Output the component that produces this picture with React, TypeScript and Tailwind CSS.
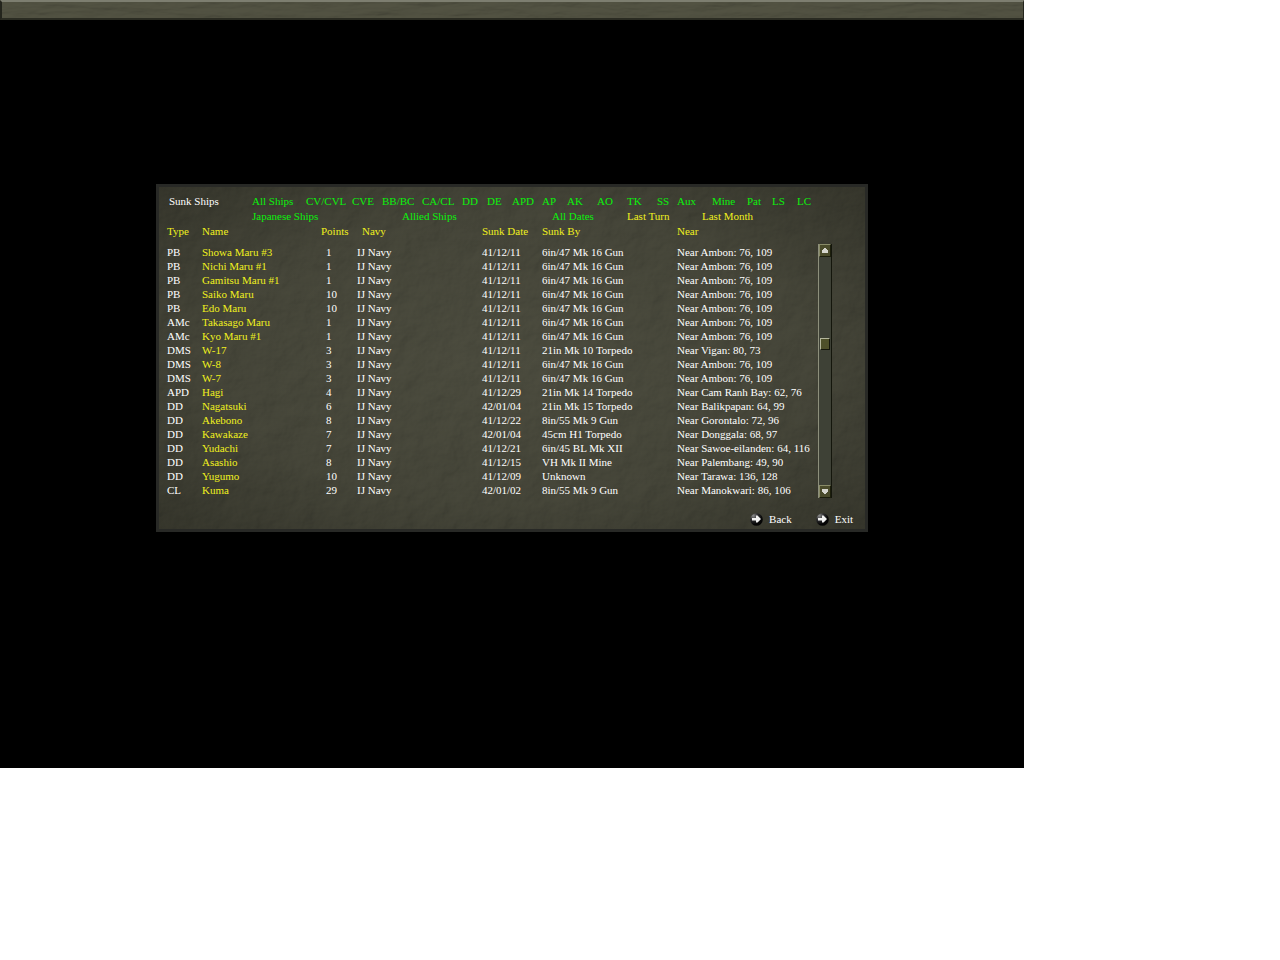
import { useState } from 'react';

type Ship = {
  type: string;
  name: string;
  points: number;
  date: string;
  by: string;
  near: string;
};

const ships: Ship[] = [
  { type: 'PB', name: 'Showa Maru #3', points: 1, date: '41/12/11', by: '6in/47 Mk 16 Gun', near: 'Ambon: 76, 109' },
  { type: 'PB', name: 'Nichi Maru #1', points: 1, date: '41/12/11', by: '6in/47 Mk 16 Gun', near: 'Ambon: 76, 109' },
  { type: 'PB', name: 'Gamitsu Maru #1', points: 1, date: '41/12/11', by: '6in/47 Mk 16 Gun', near: 'Ambon: 76, 109' },
  { type: 'PB', name: 'Saiko Maru', points: 10, date: '41/12/11', by: '6in/47 Mk 16 Gun', near: 'Ambon: 76, 109' },
  { type: 'PB', name: 'Edo Maru', points: 10, date: '41/12/11', by: '6in/47 Mk 16 Gun', near: 'Ambon: 76, 109' },
  { type: 'AMc', name: 'Takasago Maru', points: 1, date: '41/12/11', by: '6in/47 Mk 16 Gun', near: 'Ambon: 76, 109' },
  { type: 'AMc', name: 'Kyo Maru #1', points: 1, date: '41/12/11', by: '6in/47 Mk 16 Gun', near: 'Ambon: 76, 109' },
  { type: 'DMS', name: 'W-17', points: 3, date: '41/12/11', by: '21in Mk 10 Torpedo', near: 'Vigan: 80, 73' },
  { type: 'DMS', name: 'W-8', points: 3, date: '41/12/11', by: '6in/47 Mk 16 Gun', near: 'Ambon: 76, 109' },
  { type: 'DMS', name: 'W-7', points: 3, date: '41/12/11', by: '6in/47 Mk 16 Gun', near: 'Ambon: 76, 109' },
  { type: 'APD', name: 'Hagi', points: 4, date: '41/12/29', by: '21in Mk 14 Torpedo', near: 'Cam Ranh Bay: 62, 76' },
  { type: 'DD', name: 'Nagatsuki', points: 6, date: '42/01/04', by: '21in Mk 15 Torpedo', near: 'Balikpapan: 64, 99' },
  { type: 'DD', name: 'Akebono', points: 8, date: '41/12/22', by: '8in/55 Mk 9 Gun', near: 'Gorontalo: 72, 96' },
  { type: 'DD', name: 'Kawakaze', points: 7, date: '42/01/04', by: '45cm H1 Torpedo', near: 'Donggala: 68, 97' },
  { type: 'DD', name: 'Yudachi', points: 7, date: '41/12/21', by: '6in/45 BL Mk XII', near: 'Sawoe-eilanden: 64, 116' },
  { type: 'DD', name: 'Asashio', points: 8, date: '41/12/15', by: 'VH Mk II Mine', near: 'Palembang: 49, 90' },
  { type: 'DD', name: 'Yugumo', points: 10, date: '41/12/09', by: 'Unknown', near: 'Tarawa: 136, 128' },
  { type: 'CL', name: 'Kuma', points: 29, date: '42/01/02', by: '8in/55 Mk 9 Gun', near: 'Manokwari: 86, 106' },
];

const typeFilters = [
  'All Ships', 'CV/CVL', 'CVE', 'BB/BC', 'CA/CL', 'DD', 'DE', 'APD', 'AP',
  'AK', 'AO', 'TK', 'SS', 'Aux', 'Mine', 'Pat', 'LS', 'LC',
];

const scopeFilters = ['Japanese Ships', 'Allied Ships', 'All Dates', 'Last Turn', 'Last Month'];

function FilterButton({ label, on, onClick }: { label: string; on: boolean; onClick: () => void }) {
  return (
    <button
      type="button"
      aria-pressed={on}
      onClick={onClick}
      className={`text-left whitespace-nowrap ${on ? 'text-[#0cf00c]' : 'text-[#f0f01e]'}`}
    >
      {label}
    </button>
  );
}

// mottled stone surface behind the bar and the panel
function Stone({ id, frequency }: { id: string; frequency: string }) {
  return (
    <svg className="absolute inset-0 w-full h-full pointer-events-none" aria-hidden="true">
      <filter id={id} x="0" y="0" width="100%" height="100%">
        <feTurbulence type="fractalNoise" baseFrequency={frequency} numOctaves="5" seed="8" result="noise" />
        <feDiffuseLighting in="noise" surfaceScale="3" diffuseConstant="1" lightingColor="#78745c">
          <feDistantLight azimuth="225" elevation="45" />
        </feDiffuseLighting>
      </filter>
      <rect width="100%" height="100%" filter={`url(#${id})`} opacity="0.2" />
    </svg>
  );
}

function OrbIcon({ id }: { id: string }) {
  return (
    <svg width="13" height="13" viewBox="0 0 13 13" aria-hidden="true">
      <defs>
        <radialGradient id={id} cx="0.25" cy="0.2" r="0.7">
          <stop offset="0" stopColor="#8b8b8b" />
          <stop offset="0.5" stopColor="#2c2c2e" />
          <stop offset="1" stopColor="#050505" />
        </radialGradient>
      </defs>
      <circle cx="6.5" cy="6.5" r="6.3" fill={`url(#${id})`} />
      <path d="M2 5h4V2.5h1.5L11 6 7.5 9.5H6V7H2z" fill="#f0f0f0" />
      <path d="M2 7.5h4" stroke="#8a8a8a" />
    </svg>
  );
}

function NavButton({ label }: { label: string }) {
  return (
    <button type="button" className="flex items-center gap-1.5">
      <OrbIcon id={`orb-${label}`} />
      {label}
    </button>
  );
}

function ScrollBar() {
  const arrow =
    'flex items-center justify-center h-[13px] shrink-0 bg-[#4a4b2b] border border-t-[#898b68] border-l-[#898b68] border-b-[#1c1e0c] border-r-[#1c1e0c]';
  return (
    <div className="flex flex-col mt-5 w-3.5 h-[254px] bg-[#3e4136] border-l border-r border-l-[#8d8f7c] border-r-[#14160c]">
      <button type="button" aria-label="Scroll up" className={arrow}>
        <svg width="6" height="5" viewBox="0 0 6 5"><path d="M2 0h2v1h1v1h1v3H0V2h1V1h1z" fill="#d6d6ce" /></svg>
      </button>
      <div className="grow-3 basis-0" />
      <div className="h-3 mx-px shrink-0 bg-[#4e502a] border border-t-[#b4b69c] border-l-[#b4b69c] border-b-[#14160c] border-r-[#14160c]" />
      <div className="grow-5 basis-0" />
      <button type="button" aria-label="Scroll down" className={arrow}>
        <svg width="6" height="5" viewBox="0 0 6 5"><path d="M0 0h6v3H5v1H4v1H2V4H1V3H0z" fill="#d6d6ce" /></svg>
      </button>
    </div>
  );
}

export default function App() {
  const [active, setActive] = useState<string[]>([
    ...typeFilters,
    'Japanese Ships',
    'Allied Ships',
    'All Dates',
  ]);

  const toggle = (label: string) => {
    setActive(prev => (prev.includes(label) ? prev.filter(l => l !== label) : [...prev, label]));
  };

  return (
    <div className="min-h-screen bg-white">
      <main className="w-4/5 min-h-[80vh] bg-black text-white text-[11px] leading-[15px] font-['Liberation_Serif',serif]">
        <header className="relative h-5 bg-[#4b4c3e] border-t-2 border-t-[#7d7e70] border-b-2 border-b-[#2a2b22] border-l-2 border-l-[#24251d] border-r border-r-[#24251d]">
          <Stone id="stone-bar" frequency="0.02 0.12" />
        </header>

        <section className="relative w-[712px] mx-auto mt-41 border-3 border-[#282926] bg-[radial-gradient(ellipse_at_center,#44453a_0%,#3c3d33_60%,#282922_100%)]">
          <Stone id="stone-panel" frequency="0.04" />
          <div className="relative pt-[7px] pb-0.5 px-2">
            <div className="flex">
              <h1 className="w-[85px] pl-0.5">Sunk Ships</h1>
              <div>
                <div className="grid grid-cols-[54px_46px_30px_40px_40px_25px_25px_30px_25px_30px_30px_30px_20px_35px_35px_25px_25px_25px]">
                  {typeFilters.map(f => (
                    <FilterButton key={f} label={f} on={active.includes(f)} onClick={() => toggle(f)} />
                  ))}
                </div>
                <div className="grid grid-cols-[150px_150px_75px_75px_75px]">
                  {scopeFilters.map(f => (
                    <FilterButton key={f} label={f} on={active.includes(f)} onClick={() => toggle(f)} />
                  ))}
                </div>
              </div>
            </div>

            <div className="flex items-start">
              <table className="table-fixed w-[651px] text-left whitespace-nowrap">
                <colgroup>
                  <col className="w-[35px]" />
                  <col className="w-[119px]" />
                  <col className="w-[36px]" />
                  <col className="w-[125px]" />
                  <col className="w-[60px]" />
                  <col className="w-[135px]" />
                  <col />
                </colgroup>
                <thead className="text-[#f0f01e]">
                  <tr className="h-[21px] align-top">
                    <th className="font-normal">Type</th>
                    <th className="font-normal">Name</th>
                    <th className="font-normal">Points</th>
                    <th className="font-normal pl-[5px]">Navy</th>
                    <th className="font-normal">Sunk Date</th>
                    <th className="font-normal">Sunk By</th>
                    <th className="font-normal">Near</th>
                  </tr>
                </thead>
                <tbody className="leading-[14px]">
                  {ships.map(ship => (
                    <tr key={ship.name}>
                      <td>{ship.type}</td>
                      <td className="text-[#f0f01e]">{ship.name}</td>
                      <td className="pl-[5px]">{ship.points}</td>
                      <td>IJ Navy</td>
                      <td>{ship.date}</td>
                      <td>{ship.by}</td>
                      <td>Near {ship.near}</td>
                    </tr>
                  ))}
                </tbody>
              </table>
              <ScrollBar />
            </div>

            <div className="flex justify-end gap-6 pt-3.5 pr-1">
              <NavButton label="Back" />
              <NavButton label="Exit" />
            </div>
          </div>
        </section>
      </main>
    </div>
  );
}
